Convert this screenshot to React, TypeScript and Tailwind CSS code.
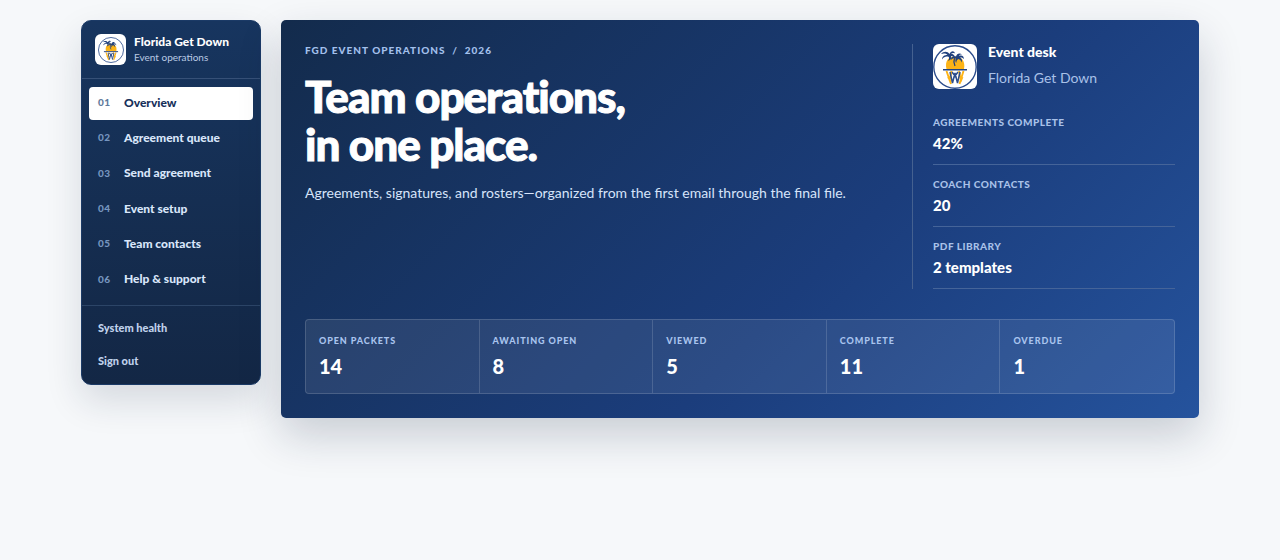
const navItems = [
  "Overview",
  "Agreement queue",
  "Send agreement",
  "Event setup",
  "Team contacts",
  "Help & support",
];

const deskRows = [
  { label: "Agreements complete", value: "42%" },
  { label: "Coach contacts", value: "20" },
  { label: "PDF library", value: "2 templates" },
];

const stats = [
  { label: "Open packets", value: "14" },
  { label: "Awaiting open", value: "8" },
  { label: "Viewed", value: "5" },
  { label: "Complete", value: "11" },
  { label: "Overdue", value: "1" },
];

function Logo({ className }: { className: string }) {
  return (
    <svg viewBox="0 0 44 44" className={className} role="img" aria-label="Florida Get Down logo">
      <circle cx="22" cy="22" r="21.2" fill="#fff" stroke="#2b4c8c" strokeWidth="1.4" />
      <path d="M13.500 24C11.500 16 15.500 11.500 22 11.500S32.500 16 31 24Z" fill="#fcb316" />
      <path d="M13.500 26L18 39M18.500 26l-2 10M30.500 26L26.500 39M26 26l2 10M15 32l3 5M29.500 32l-2 5" stroke="#fcb316" strokeWidth="1.9" fill="none" />
      <path d="M10 24.800H34" stroke="#22427e" strokeWidth="1.600" />
      <path d="M17 27l2.500 11 2.500-10 2.500 10 2.500-11M19 27l4.500 6M25 27l-4.500 6" stroke="#2b4c8c" strokeWidth="1.500" fill="none" />
      <path
        d="M16.500 9C14.500 6 10.500 6 8 9c3-1 5-.5 6.500.8-3 .2-5.500 1.700-5.500 4.700 2-2.800 4-3.300 6.500-2.700 1 1 .5 2.700-.5 4.200 3-1 3.800-3 3-5 2 .2 3 1 3.500 2.500.8-3-1-4.700-3.500-4.500 1.200-1.200 2.700-1.200 4-.5-.8-3-4-3-5.500.5Z"
        fill="#22427e"
      />
      <path
        d="M23 11.500c-2.800-.8-5 .7-5.300 3.700 1.800-1.800 3.300-2.200 5-1.700-.5 1.500-.5 3 .5 4.500.2-2 .8-3.300 2-4 2 .5 3 1.800 3.300 3.500 1.200-2.300.3-4-1.500-5 1.800-.3 3 .3 3.800 1.700.4-3-2-4.500-4.800-3.200.5-1.200 1.500-1.600 3-1.400-2.300-2-5.300-1-6 1.900Z"
        fill="#22427e"
      />
      <path d="M21.500 13c-1 3-1 5 .5 8" stroke="#22427e" strokeWidth="1.300" fill="none" />
    </svg>
  );
}

function Sidebar() {
  return (
    <aside className="overflow-hidden rounded-[10px] border border-[#1b3a66] bg-linear-to-b from-[#17355f] to-[#132745] shadow-[0_16px_36px_rgba(20,35,65,0.14)]">
      <div className="flex items-center gap-2 border-b border-[#365077] px-[13px] py-[13px]">
        <span className="flex size-[31px] shrink-0 items-center justify-center rounded-md bg-white">
          <Logo className="size-[26px]" />
        </span>
        <div>
          <p className="text-xs leading-4 font-black text-white">Florida Get Down</p>
          <p className="text-[10px] leading-[15px] text-[#b9cae4]">Event operations</p>
        </div>
      </div>
      <nav aria-label="Main" className="flex min-h-[226px] flex-col gap-0.5 px-[7px] py-2">
        {navItems.map((item, i) => (
          <a
            key={item}
            href="#"
            aria-current={i === 0 ? "page" : undefined}
            className={
              i === 0
                ? "flex flex-1 items-center rounded bg-white px-[9px] pb-0.5 text-xs font-black text-[#17305a]"
                : "flex flex-1 items-center rounded px-[9px] pb-0.5 text-xs font-black text-[#d9e6fa]"
            }
          >
            <span
              className={
                i === 0
                  ? "w-[26px] text-[10px] tracking-wider text-[#5f7a9c]"
                  : "w-[26px] text-[10px] tracking-wider text-[#7695bf]"
              }
            >
              0{i + 1}
            </span>
            {item}
          </a>
        ))}
      </nav>
      <div className="flex flex-col border-t border-[#2c4567] px-4 pt-[5px] pb-[7px] text-[11px] leading-[33px] font-black text-[#c0d2ec]">
        <a href="#">System health</a>
        <a href="#">Sign out</a>
      </div>
    </aside>
  );
}

function Hero() {
  return (
    <section className="rounded-[5px] bg-linear-135 from-[#132b4c] via-[#1b3d7c] via-60% to-[#25539d] p-6 shadow-[0_18px_44px_rgba(20,35,65,0.2)]">
      <div className="grid grid-cols-[1fr_263px]">
        <div>
          <p className="text-[10px] leading-3 font-black tracking-[1px] whitespace-pre text-[#a3c0ec] uppercase">
            FGD Event Operations  /  2026
          </p>
          <h1 className="mt-4 text-[44px] leading-12 font-black tracking-[-1px] text-white [-webkit-text-stroke:1px]">
            Team operations,
            <br />
            in one place.
          </h1>
          <p className="mt-[15px] text-sm leading-5 text-[#d6e4fa]">
            Agreements, signatures, and rosters—organized from the first email through the final file.
          </p>
        </div>
        <div className="border-l border-[#456190] pl-5">
          <div className="flex items-start gap-[11px]">
            <span className="flex h-[45px] w-11 items-center justify-center overflow-hidden rounded-md bg-white">
              <Logo className="size-11" />
            </span>
            <div>
              <p className="text-sm leading-4 font-black text-white">Event desk</p>
              <p className="mt-2 text-sm leading-[19px] text-[#a9c1e8]">Florida Get Down</p>
            </div>
          </div>
          <dl className="mt-3.5">
            {deskRows.map((row) => (
              <div key={row.label} className="border-b border-[#456499] py-[11px]">
                <dt className="text-[10px] leading-4 font-black tracking-wider text-[#a9c1e8] uppercase">{row.label}</dt>
                <dd className="pt-[3px] text-[15px] leading-5 font-black text-white">{row.value}</dd>
              </div>
            ))}
          </dl>
        </div>
      </div>
      <dl className="mt-[30px] grid grid-cols-5 divide-x divide-white/15 rounded border border-white/15 bg-white/8">
        {stats.map((stat) => (
          <div key={stat.label} className="px-[13px] py-[13px]">
            <dt className="text-[9px] leading-4 font-black tracking-widest text-[#a9c4ee] uppercase">{stat.label}</dt>
            <dd className="pt-[3px] text-xl leading-7 font-black text-white">{stat.value}</dd>
          </div>
        ))}
      </dl>
    </section>
  );
}

export default function App() {
  return (
    <main className="min-h-screen bg-[#f6f8fa] p-5 font-['Lato',sans-serif]">
      <div className="mx-auto grid max-w-[1118px] grid-cols-[180px_1fr] items-start gap-5">
        <Sidebar />
        <Hero />
      </div>
    </main>
  );
}
